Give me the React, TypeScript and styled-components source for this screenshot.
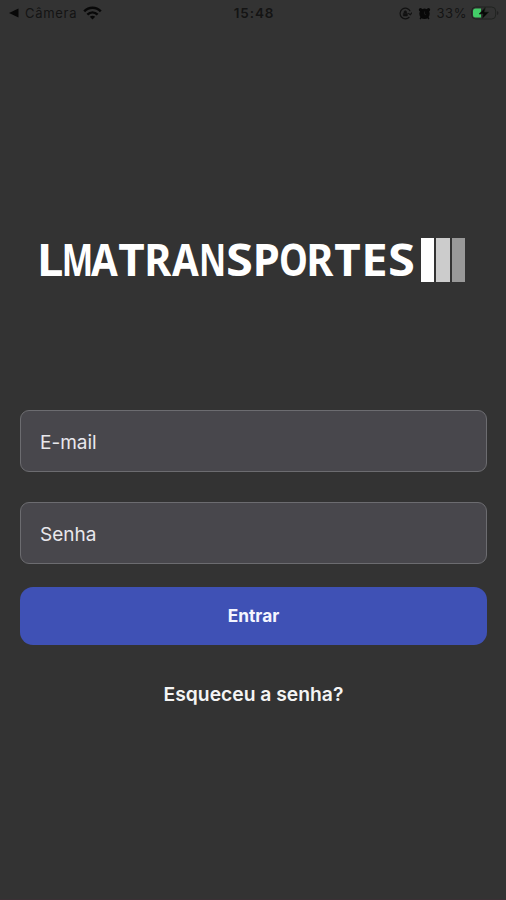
import React from "react";
import styled, { createGlobalStyle } from "styled-components";

const GlobalStyle = createGlobalStyle`
  * { box-sizing: border-box; }
  body { margin: 0; background: #333333; font-family: Inter, Roboto, sans-serif; }
`;

const Screen = styled.main`
  height: 900px;
  display: flex;
  flex-direction: column;
  background: #333333;
  border-bottom: 1px solid #3b3035;
`;

const StatusBar = styled.header`
  height: 26px;
  display: grid;
  grid-template-columns: 1fr auto 1fr;
  align-items: center;
  padding: 0 7px 0 9px;
  color: #141414;
  font-size: 13px;
  line-height: 16px;
`;

const StatusGroup = styled.div<{ $end?: boolean }>`
  display: flex;
  align-items: center;
  justify-content: ${(p) => (p.$end ? "flex-end" : "flex-start")};
`;

const StatusText = styled.span<{ $spacing: number; $left?: number; $right?: number }>`
  display: inline-flex;
  letter-spacing: ${(p) => p.$spacing}px;
  margin-left: ${(p) => p.$left ?? 0}px;
  margin-right: ${(p) => p.$right ?? 0}px;
`;

const Clock = styled.time`
  font-size: 13.5px;
  font-weight: 600;
  letter-spacing: 0.9px;
`;

const Brand = styled.h1`
  display: flex;
  align-items: center;
  height: 46px;
  margin: 211px 0 0 36.5px;
`;

const BrandName = styled.span`
  display: flex;
  width: 384.5px;
  padding-left: 0.5px;
  color: #ffffff;
  font-family: "Noto Sans", sans-serif;
  font-size: 44.5px;
  font-weight: 700;
  line-height: 44px;
  height: 46px;
`;

const Letter = styled.span<{ $stretch: number; $shift: number }>`
  display: flex;
  justify-content: center;
  width: 27px;
  flex: none;
  transform: translateX(${(p) => p.$shift}px) scaleX(${(p) => p.$stretch});
`;

const Bars = styled.span`
  display: flex;
  gap: 2px;
`;

const Bar = styled.i<{ $tone: string }>`
  width: 13.4px;
  height: 44px;
  background: ${(p) => p.$tone};
`;

const LoginForm = styled.form`
  display: flex;
  flex-direction: column;
  margin: 127px 19px 0 20px;
`;

const Field = styled.input`
  height: 62px;
  margin-bottom: 30px;
  padding: 2px 19px 0;
  border: 1px solid #6c6c70;
  border-radius: 9px;
  outline: none;
  background: #48474c;
  color: #ececee;
  font: 400 19px Inter, sans-serif;
  &::placeholder { color: #e8e8ec; opacity: 1; }
  &:last-of-type { margin-bottom: 23px; }
`;

const SubmitButton = styled.button`
  height: 58px;
  padding: 0 0 1px;
  border: 0;
  border-radius: 13px;
  background: #3f51b5;
  color: #f4f5ff;
  font: 700 17.3px Inter, sans-serif;
`;

const ForgotLink = styled.a`
  align-self: center;
  margin-top: 36px;
  color: #f4f4f4;
  font-size: 19.3px;
  font-weight: 600;
  line-height: 26px;
`;

const BackIcon = () => (
  <svg width="10" height="10" viewBox="0 0 10 10"><path d="M0 5 9.5 .5v9z" fill="#080808" /></svg>
);

const WifiIcon = () => (
  <svg width="19" height="14" viewBox="0 0 19 14" fill="none" stroke="#080808" strokeWidth="2.5">
    <path d="M1.2 5.4c4.8-4.9 11.8-4.9 16.6 0M4.4 8.6c3-2.9 7.2-2.9 10.2 0" />
    <path d="M6.8 10.8q2.7-2.2 5.4 0L9.5 13.6z" fill="#080808" stroke="none" />
  </svg>
);

const RotationLockIcon = () => (
  <svg width="13" height="13" viewBox="0 0 13 13" fill="none" stroke="#111" strokeWidth="1.2">
    <path d="M11.2 4.3A5.3 5.3 0 1 0 10.4 10M9.2 6.2l2.2 1.5L13 5.6" />
    <path d="M4.3 6.4h4v2.5h-4zM5.1 6V5a1.2 1.2 0 0 1 2.4 0v1" fill="#111" strokeWidth=".7" />
  </svg>
);

const AlarmIcon = () => (
  <svg width="13" height="13" viewBox="0 0 13 13">
    <g fill="#080808">
      <circle cx="6.5" cy="6.7" r="5.2" />
      <circle cx="2.5" cy="2.7" r="1.7" />
      <circle cx="10.5" cy="2.7" r="1.7" />
      <path d="m3.5 10-1.4 2M9.5 10l1.4 2" stroke="#080808" strokeWidth="1.5" />
    </g>
    <path d="M6.5 4.5v2.7l1.6.6" fill="none" stroke="#222" strokeWidth=".7" />
  </svg>
);

const BatteryIcon = () => (
  <svg width="28" height="14" viewBox="0 0 28 14">
    <rect x=".7" y="1" width="24" height="12" rx="4" fill="none" stroke="#202320" />
    <path d="M4.5 2.5H10v9H4.5Q2 11.5 2 9V5Q2 2.5 4.5 2.5z" fill="#43cd68" />
    <path d="M14.5 1 8 8h4l-1 5 7-7h-4.5z" fill="#060806" stroke="#202820" strokeWidth=".7" />
    <path d="M26.2 5v4q1.2-.5 1.2-2t-1.2-2z" fill="#1e1e1e" />
  </svg>
);

const glyphFit: Record<string, [number, number]> = {
  L: [1.06, -0.4],
  M: [0.75, 0],
  A: [0.87, 0],
  T: [1.03, 0],
  R: [0.93, -0.6],
  N: [0.75, 0],
  S: [1.1, 0],
  P: [0.98, -0.3],
  O: [0.82, 0],
  E: [1.06, 0],
};

export default function App() {
  return (
    <>
      <GlobalStyle />
      <Screen>
        <StatusBar>
          <StatusGroup>
            <BackIcon />
            <StatusText $spacing={0.7} $left={6} $right={6}>Câmera</StatusText>
            <WifiIcon />
          </StatusGroup>
          <Clock>15:48</Clock>
          <StatusGroup $end>
            <RotationLockIcon />
            <StatusText $spacing={0} $left={6}><AlarmIcon /></StatusText>
            <StatusText $spacing={0.6} $left={5} $right={4}>33%</StatusText>
            <BatteryIcon />
          </StatusGroup>
        </StatusBar>
        <Brand>
          <BrandName>
            {[..."LMATRANSPORTES"].map((c, i) => (
              <Letter key={i} $stretch={glyphFit[c][0]} $shift={glyphFit[c][1]}>{c}</Letter>
            ))}
          </BrandName>
          <Bars><Bar $tone="#ffffff" /><Bar $tone="#cccccc" /><Bar $tone="#999999" /></Bars>
        </Brand>
        <LoginForm onSubmit={(e) => e.preventDefault()}>
          <Field type="email" placeholder="E-mail" aria-label="E-mail" />
          <Field type="password" placeholder="Senha" aria-label="Senha" />
          <SubmitButton>Entrar</SubmitButton>
          <ForgotLink>Esqueceu a senha?</ForgotLink>
        </LoginForm>
      </Screen>
    </>
  );
}
